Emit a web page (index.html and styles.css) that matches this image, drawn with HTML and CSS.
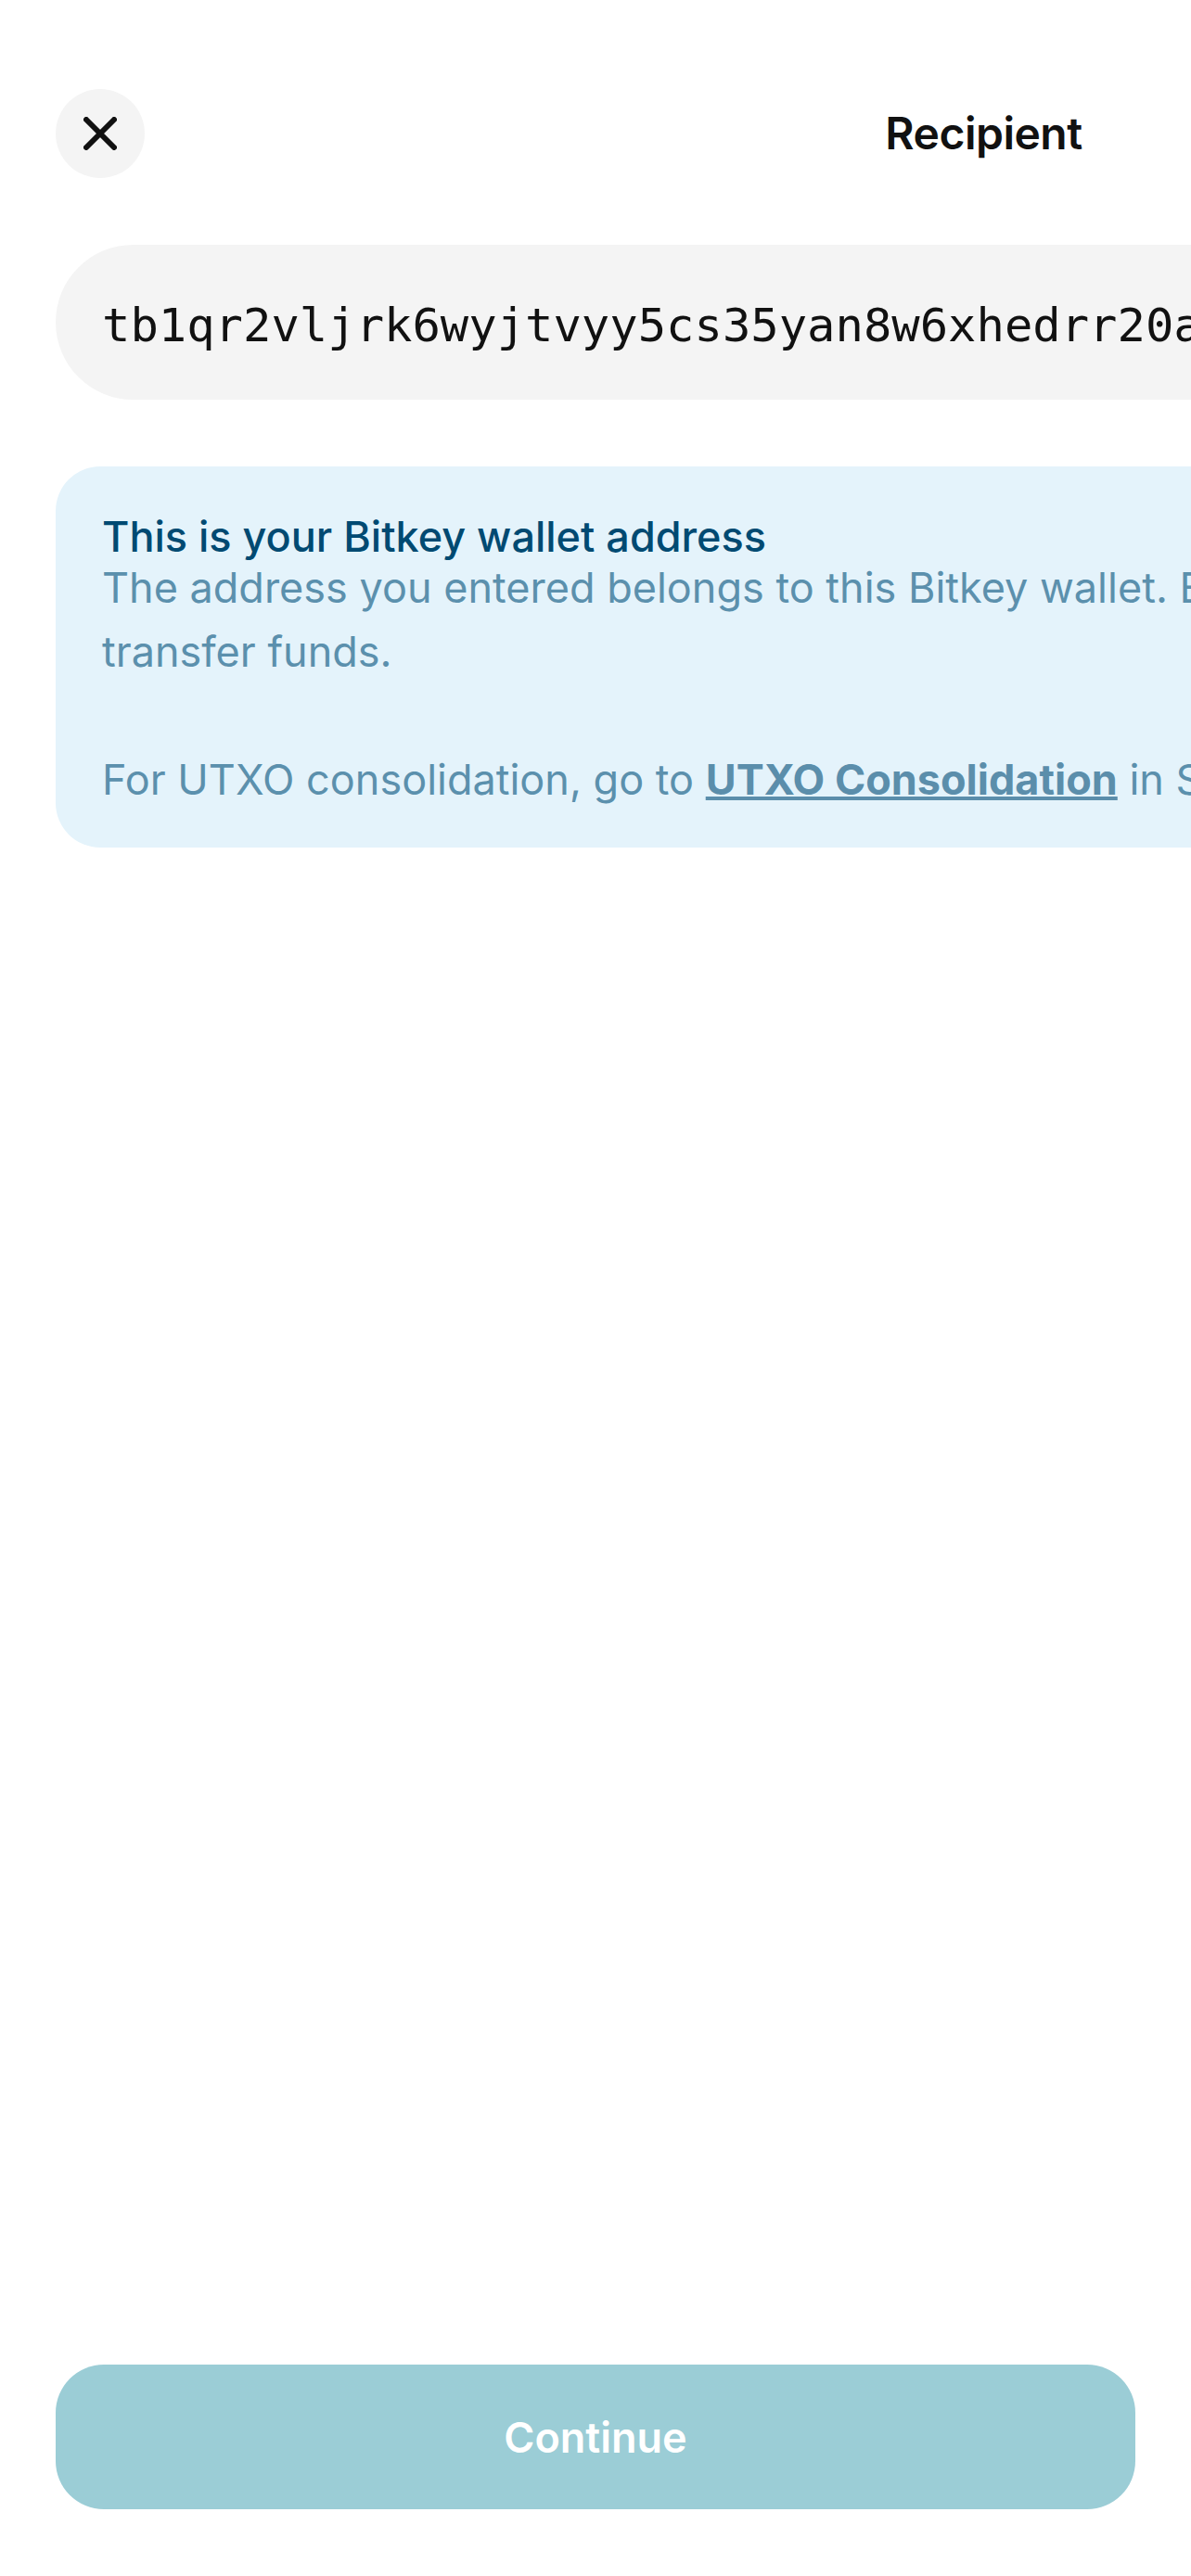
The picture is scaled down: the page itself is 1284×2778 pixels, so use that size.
FILE: index.html
```html
<!DOCTYPE html>
<html lang="en">
<head>
<meta charset="utf-8">
<title>Recipient</title>
<link rel="stylesheet" href="styles.css">
</head>
<body>
<div class="screen">
  <main class="content">
    <header class="topbar">
      <button class="close-btn" aria-label="Close">
        <svg width="36" height="36" viewBox="0 0 36 36" aria-hidden="true">
          <path d="M3 3 L33 33 M33 3 L3 33" stroke="#111111" stroke-width="6" stroke-linecap="round" fill="none"/>
        </svg>
      </button>
      <h1 class="title">Recipient</h1>
      <span class="spacer"></span>
    </header>

    <div class="address-field">
      <span class="address-text">tb1qr2vljrk6wyjtvyy5cs35yan8w6xhedrr20a7kq3mvnxw5gsqjqv8s6h0lxf</span>
    </div>

    <section class="callout">
      <h2 class="callout-title">This is your Bitkey wallet address</h2>
      <p class="callout-body">The address you entered belongs to this Bitkey wallet. Bitkey wallets can't be used to<br>transfer funds.</p>
      <p class="callout-body callout-body--spaced">For UTXO consolidation, go to <a class="callout-link" href="#">UTXO Consolidation</a> in Settings.</p>
    </section>
  </main>

  <footer class="footer">
    <button class="continue-btn">Continue</button>
  </footer>
</div>
</body>
</html>
```

FILE: styles.css
```css
html, body {
  margin: 0;
  padding: 0;
  background: #ffffff;
  overflow: hidden;
}

body {
  font-family: Inter, "Noto Sans", "Liberation Sans", sans-serif;
  color: #111111;
}

.screen {
  display: flex;
  flex-direction: column;
  width: 1284px;
  height: 2778px;
  overflow: hidden;
}

.content {
  flex: 1 1 auto;
  width: 2001px;
  padding: 96px 60px 0 60px;
  display: flex;
  flex-direction: column;
  gap: 72px;
}

.topbar {
  display: grid;
  grid-template-columns: 96px 1fr 96px;
  align-items: center;
  height: 96px;
}

.close-btn {
  width: 96px;
  height: 96px;
  border-radius: 50%;
  border: none;
  background: #f4f4f4;
  padding: 0;
  display: flex;
  align-items: center;
  justify-content: center;
}

.title {
  margin: 0;
  text-align: center;
  font-size: 48px;
  font-weight: 600;
  letter-spacing: -0.5px;
  line-height: 96px;
  color: #111111;
}

.address-field {
  height: 167px;
  box-sizing: border-box;
  border-radius: 84px;
  background: #f4f4f4;
  display: flex;
  align-items: center;
  padding: 6px 50px 0 50px;
  overflow: hidden;
}

.address-text {
  font-family: "DejaVu Sans Mono", "Liberation Mono", monospace;
  font-size: 50.5px;
  color: #111111;
  white-space: nowrap;
}

.callout {
  background: #e4f3fb;
  border-radius: 48px;
  padding: 56px 50px 39px 50px;
}

.callout-title {
  margin: 0;
  font-size: 45px;
  font-weight: 500;
  line-height: 40px;
  color: #004a72;
}

.callout-body {
  margin: 0;
  font-size: 45px;
  font-weight: 400;
  line-height: 69px;
  color: #5b90ad;
}

.callout-body--spaced {
  margin-top: 69px;
}

.callout-link {
  color: #5b8eab;
  font-weight: 700;
  text-decoration: underline;
  text-decoration-thickness: 4px;
}

.footer {
  padding: 0 60px 72px 60px;
}

.continue-btn {
  display: block;
  width: 100%;
  height: 156px;
  border: none;
  border-radius: 52px;
  background: #9bcdd6;
  color: #ffffff;
  font-family: Inter, "Noto Sans", "Liberation Sans", sans-serif;
  font-size: 45px;
  font-weight: 600;
}
```
